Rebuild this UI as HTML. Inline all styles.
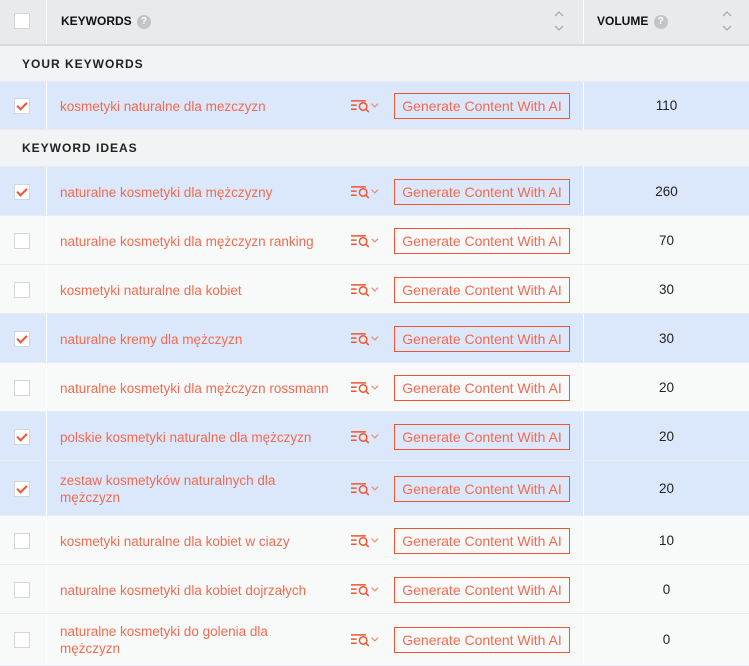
<!DOCTYPE html>
<html><head><style>
*{margin:0;padding:0;box-sizing:border-box}
body{width:749px;height:662px;overflow:hidden;background:#f7f8f8;font-family:"Liberation Sans",sans-serif;position:relative}
.r{position:absolute;left:0;width:749px;border-bottom:1px solid #e9ecef}
.sel{background:#dbe7fb}
.un{background:#f8f9f9}
.sec{background:#f2f3f4;font-size:12px;font-weight:bold;letter-spacing:1px;color:#222;padding-left:22px}
.cb{position:absolute;left:14px;width:16px;height:16px;background:#fff;border:1px solid #d3d6d9}
.cb.c::after{content:"";position:absolute;left:4px;top:1px;width:4px;height:8px;border:solid #f0552f;border-width:0 2px 2px 0;transform:rotate(45deg)}
.div{position:absolute;left:46px;top:0;bottom:0;width:1px;background:#fff}
.div2{position:absolute;left:583px;top:0;bottom:0;width:1px;background:#fff}
.kw{position:absolute;left:60px;font-size:13.5px;color:#f26b50;line-height:17px;width:280px}
.ic{position:absolute;left:349px;width:32px;height:14px}
.btn{position:absolute;left:394px;width:176px;height:26px;border:1px solid #f0552f;color:#f26b50;font-size:14px;line-height:24px;text-align:center}
.v{position:absolute;left:584px;width:165px;text-align:center;font-size:13.5px;color:#222}
.q{display:inline-block;width:14px;height:14px;border-radius:50%;background:#c2c4c6;color:#fff;font-size:10px;text-align:center;line-height:14px;vertical-align:middle;margin-left:2px}
.ar{position:absolute;top:10px}
</style></head><body>
<div class="r" style="top:0;height:46px;background:#e8eaeb;border-bottom:2px solid #d6d9dc">
<div class="cb" style="top:13px"></div>
<div class="div"></div><div class="div2"></div>
<div style="position:absolute;left:61px;top:13px;font-size:12px;font-weight:bold;color:#111;line-height:16px">KEYWORDS <span class="q">?</span></div>
<svg class="ar" style="left:553px" width="12" height="22"><path d="M2 6l4-4 4 4M2 16l4 4 4-4" fill="none" stroke="#a8acb0" stroke-width="1.3"/></svg>
<div style="position:absolute;left:597px;top:13px;font-size:12px;font-weight:bold;color:#111;line-height:16px">VOLUME <span class="q">?</span></div>
<svg class="ar" style="left:721px" width="12" height="22"><path d="M2 6l4-4 4 4M2 16l4 4 4-4" fill="none" stroke="#a8acb0" stroke-width="1.3"/></svg>
</div>
<div class="r sec" style="top:46px;height:36px;line-height:36px">YOUR KEYWORDS</div>
<div class="r sec" style="top:130px;height:37px;line-height:37px">KEYWORD IDEAS</div>
<svg width="0" height="0" style="position:absolute"><defs><g id="ic" fill="none" stroke="#f0552f" stroke-width="1.6"><path d="M1 2h16M1 6.5h6M1 11h6"/><circle cx="14" cy="8" r="4"/><path d="M17 11l3 3"/><path d="M23 5l3.5 3.5L30 5" stroke="#f28a70" stroke-width="1.3"/></g></defs></svg>
<div id="rows"></div>
<script>
var rows=[[82,48,1,"kosmetyki naturalne dla mezczyzn","110"],[167,49,1,"naturalne kosmetyki dla mężczyzny","260"],[216,49,0,"naturalne kosmetyki dla mężczyzn ranking","70"],[265,49,0,"kosmetyki naturalne dla kobiet","30"],[314,49,1,"naturalne kremy dla mężczyzn","30"],[363,49,0,"naturalne kosmetyki dla mężczyzn rossmann","20"],[412,49,1,"polskie kosmetyki naturalne dla mężczyzn","20"],[461,55,1,"zestaw kosmetyków naturalnych dla mężczyzn","20"],[516,49,0,"kosmetyki naturalne dla kobiet w ciazy","10"],[565,49,0,"naturalne kosmetyki dla kobiet dojrzałych","0"],[614,52,0,"naturalne kosmetyki do golenia dla mężczyzn","0"]];
var h="";rows.forEach(function(r){var t=r[0],H=r[1],m=H/2;var two=r[3].indexOf("zestaw")==0||r[3].indexOf("golenia")>0;
h+='<div class="r '+(r[2]?'sel':'un')+'" style="top:'+t+'px;height:'+H+'px"><div class="div"></div><div class="div2"></div><div class="cb'+(r[2]?' c':'')+'" style="top:'+(m-8)+'px"></div><div class="kw" style="top:'+(two?m-17:m-8)+'px;width:'+(two?240:300)+'px">'+r[3]+'</div><svg class="ic" style="top:'+(m-7)+'px" viewBox="0 0 32 15"><use href="#ic"/></svg><div class="btn" style="top:'+(m-13)+'px">Generate Content With AI</div><div class="v" style="top:'+(m-8)+'px">'+r[4]+'</div></div>';});
document.getElementById("rows").innerHTML=h;
</script>
</body></html>
